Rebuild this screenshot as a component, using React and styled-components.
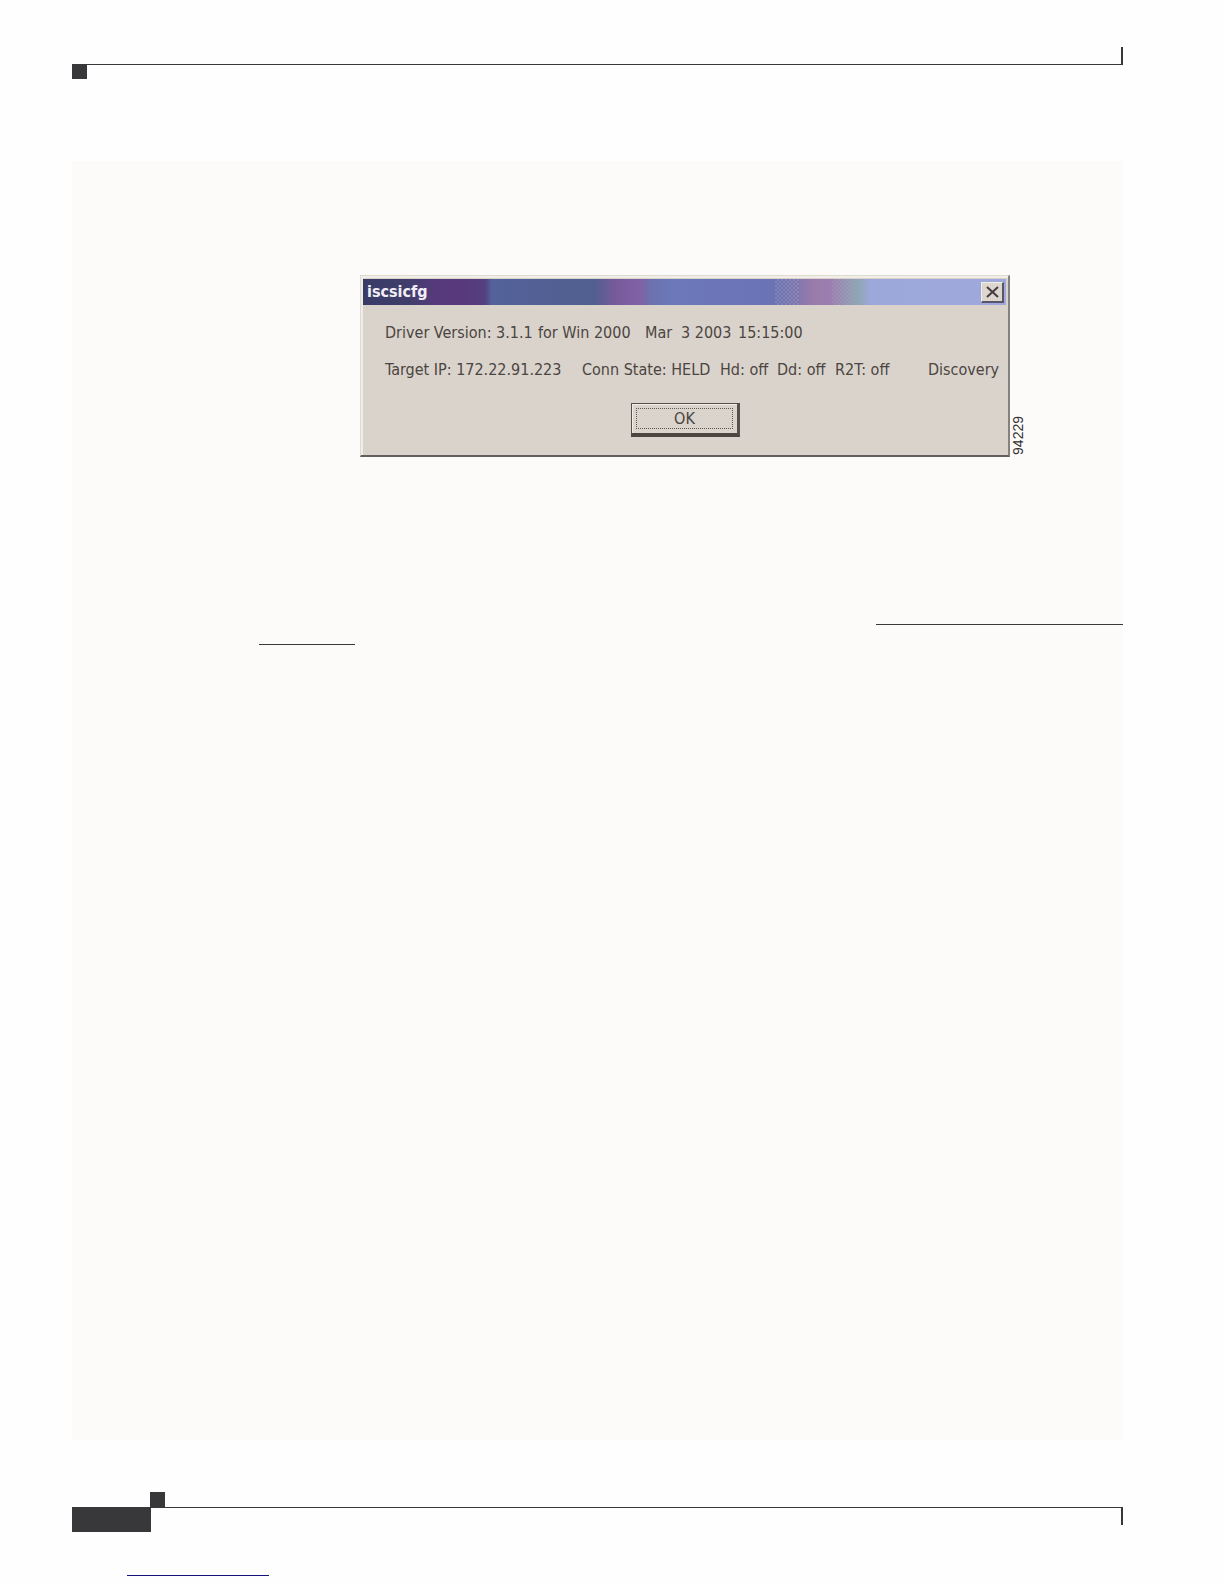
import React from "react";
import styled, { createGlobalStyle } from "styled-components";

const versionFields = ["Driver Version: 3.1.1", "for Win 2000", "Mar", "3 2003", "15:15:00"];

const targetFields = [
  "Target IP: 172.22.91.223",
  "Conn State: HELD",
  "Hd: off",
  "Dd: off",
  "R2T: off",
  "Discovery",
];

const App = () => {
  return (
    <>
      <GlobalStyle />
      <Page>
        <Header>
          <Square />
        </Header>
        <Main>
          <Figure>
            <Dialog role="dialog" aria-labelledby="dialog-title">
              <TitleBar>
                <Title id="dialog-title">iscsicfg</Title>
                <CloseButton type="button" aria-label="Close">
                  <svg width="13" height="12" viewBox="0 0 13 12">
                    <path d="M1 1L12 11M12 1L1 11" stroke="#453a40" strokeWidth="2" />
                  </svg>
                </CloseButton>
              </TitleBar>
              <Body>
                <Row $columns="153px 107px 36px 57px auto">
                  {versionFields.map((field) => (
                    <span key={field}>{field}</span>
                  ))}
                </Row>
                <Row $columns="197px 138px 57px 58px 93px auto">
                  {targetFields.map((field) => (
                    <span key={field}>{field}</span>
                  ))}
                </Row>
                <OkButton type="button">
                  <span>OK</span>
                </OkButton>
              </Body>
            </Dialog>
            <FigureNumber>94229</FigureNumber>
          </Figure>
          <Rules>
            <Rule $width="247px" $align="flex-end" />
            <Rule $width="96px" $align="flex-start" />
          </Rules>
        </Main>
        <Footer>
          <FooterTop>
            <Square />
          </FooterTop>
          <FooterLine>
            <PageBox />
          </FooterLine>
        </Footer>
        <BottomRule />
      </Page>
    </>
  );
};

const GlobalStyle = createGlobalStyle`
  * {
    box-sizing: border-box;
  }

  body {
    margin: 0;
    background: #fefefe;
    font-family: "DejaVu Sans Condensed", "DejaVu Sans", sans-serif;
    color: #4b4541;
  }
`;

const Page = styled.div`
  display: flex;
  flex-direction: column;
  min-height: 100vh;
  padding: 47px 101px 8px 72px;
`;

const Square = styled.div`
  width: 15px;
  height: 15px;
  background: #38373a;
`;

const Header = styled.header`
  height: 32px;
  padding-top: 17px;
  background:
    linear-gradient(#38373a, #38373a) 0 17px / 100% 1px no-repeat,
    linear-gradient(#38373a, #38373a) 100% 0 / 2px 18px no-repeat;
`;

const Main = styled.main`
  flex: 1;
  margin-top: 82px;
  padding-top: 114px;
  background: #fcfbf9;
`;

const Figure = styled.figure`
  display: flex;
  align-items: flex-end;
  margin: 0 0 0 288px;
`;

const Dialog = styled.section`
  width: 650px;
  padding: 3px 2px 2px;
  background: #dad3cc;
  border: 1px solid #dedcd1;
  border-right: 2px solid #85817c;
  border-bottom: 2px solid #625f5c;
  box-shadow: inset 2px 2px #f0eee6;
`;

const TitleBar = styled.div`
  position: relative;
  display: flex;
  align-items: center;
  justify-content: space-between;
  height: 26px;
  padding: 0 2px 0 4px;
  background: linear-gradient(
    90deg,
    #383d66 0,
    #403d6b 7%,
    #553a7b 11%,
    #583a7c 16%,
    #54407f 19%,
    #53629a 20%,
    #515f8f 36%,
    #755a9a 39%,
    #8161a6 43%,
    #6b73ae 45%,
    #6b78ba 48%,
    #6b73b5 64%,
    #7a75b2 67%,
    #9b7baa 70%,
    #9c7eb2 73%,
    #8ea6b4 77%,
    #9da8da 79%,
    #9fa8dc 100%
  );

  /* dithered bands where the gradient changes hue */
  &::before,
  &::after {
    content: "";
    position: absolute;
    top: 0;
    bottom: 0;
    width: 24px;
    background: repeating-conic-gradient(#a3a3b855 0 25%, transparent 0 50%) 0 0 / 4px 4px;
  }

  &::before {
    left: 64%;
  }

  &::after {
    left: 73%;
  }
`;

const Title = styled.h1`
  margin: 0;
  color: #f2eef7;
  font-size: 16px;
  line-height: 24px;
`;

const CloseButton = styled.button`
  display: flex;
  align-items: center;
  justify-content: center;
  width: 23px;
  height: 21px;
  padding: 0;
  background: #dcd6cc;
  border: 1px solid #f2efe6;
  border-right: 2px solid #59566a;
  border-bottom: 2px solid #59566a;
`;

const Body = styled.div`
  display: flex;
  flex-direction: column;
  gap: 13px;
  padding: 16px 0 16px 22px;
`;

const Row = styled.div`
  display: grid;
  grid-template-columns: ${({ $columns }) => $columns};
  font-size: 16px;
  line-height: 24px;
  white-space: nowrap;
`;

const OkButton = styled.button`
  align-self: center;
  width: 109px;
  height: 34px;
  margin: 8px 0 0 -20px;
  padding: 4px;
  background: #dad4cc;
  border: 1px solid #55504b;
  border-right: 3px solid #55504b;
  border-bottom: 4px solid #4b463f;
  box-shadow: inset 1px 1px #f0ede4;
  color: #4b4541;
  font-family: inherit;
  font-size: 16px;

  span {
    display: block;
    border: 1px dotted #5d5853;
    line-height: 19px;
  }
`;

const FigureNumber = styled.figcaption`
  margin-bottom: 2px;
  color: #333;
  font-family: "Liberation Sans", Arial, sans-serif;
  font-size: 14px;
  line-height: 16px;
  writing-mode: vertical-rl;
  transform: rotate(180deg);
`;

const Rules = styled.div`
  display: flex;
  flex-direction: column;
  gap: 19px;
  margin: 167px 0 0 187px;
`;

const Rule = styled.div`
  align-self: ${({ $align }) => $align};
  width: ${({ $width }) => $width};
  height: 1px;
  background: #38373a;
`;

const Footer = styled.footer`
  margin-top: 52px;
`;

const FooterTop = styled.div`
  padding-left: 78px;
`;

const FooterLine = styled.div`
  background:
    linear-gradient(#38373a, #38373a) 0 0 / 100% 1px no-repeat,
    linear-gradient(#38373a, #38373a) 100% 0 / 2px 18px no-repeat;
`;

const PageBox = styled.div`
  width: 79px;
  height: 25px;
  background: #38373a;
`;

const BottomRule = styled.div`
  width: 142px;
  height: 1px;
  margin: 43px 0 0 55px;
  background: #14147c;
`;

export default App;
